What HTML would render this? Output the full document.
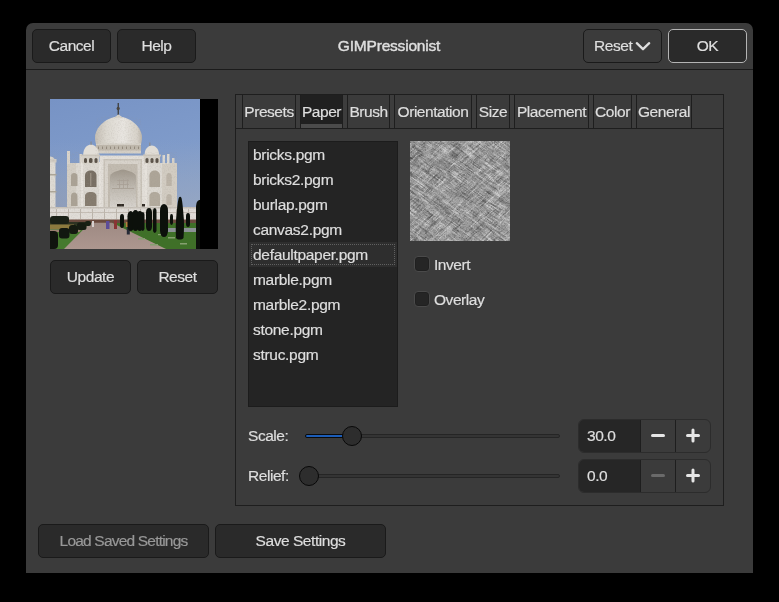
<!DOCTYPE html>
<html><head><meta charset="utf-8">
<style>
*{box-sizing:border-box;margin:0;padding:0}
html,body{width:779px;height:602px;background:#000;overflow:hidden}
body{position:relative;font-family:"Liberation Sans",sans-serif;color:#dedede;font-size:15.5px}
.abs{position:absolute}
#win{position:absolute;left:26px;top:23px;width:727px;height:550px;background:#3b3b3b;border-radius:7px 7px 0 0}
.hline{position:absolute;left:26px;top:69px;width:727px;height:1px;background:#1b1b1b}
.btn{position:absolute;background:#2a2a2a;border:1px solid #1a1a1a;border-radius:5px}
.t{position:absolute;white-space:nowrap;will-change:transform;letter-spacing:-0.45px;-webkit-text-stroke:0.2px currentColor;line-height:18px;height:18px}
.list{position:absolute;left:248px;top:141px;width:150px;height:266px;background:#242424;border:1px solid #1c1c1c}
.nb{position:absolute;left:235px;top:94px;width:489px;height:412px;border:1px solid #1e1e1e}
.tab{position:absolute;top:95px;height:34px;border-bottom:1px solid #1e1e1e}
.sep{position:absolute;top:95px;height:34px;width:6px;border-left:1px solid #1e1e1e;border-right:1px solid #1e1e1e;background:#3d3d3d;border-bottom:1px solid #1e1e1e}
.cb{position:absolute;width:16px;height:16px;background:#252525;border:1px solid #4a4a4a;border-radius:4px;box-shadow:inset 0 0 0 1px #202020}
.spin{position:absolute;left:578px;width:133px;height:34px;border:1px solid #2c2c2c;border-radius:6px;background:#3b3b3b;overflow:hidden}
.track{position:absolute;left:305px;width:255px;height:4px;border-radius:2px;background:#343434;border:1px solid #252525}
.knob{position:absolute;width:20px;height:20px;border-radius:50%;background:#2d2d2d;border:1.6px solid #080808}
</style></head><body>
<div id="win"></div>
<div class="hline"></div>
<div class="btn" style="left:32px;top:29px;width:79px;height:34px"></div>
<div class="t" style="left:32px;top:36.63px;width:79px;text-align:center;font-size:15.5px;">Cancel</div>
<div class="btn" style="left:117px;top:29px;width:79px;height:34px"></div>
<div class="t" style="left:117px;top:36.63px;width:79px;text-align:center;font-size:15.5px;">Help</div>
<div class="t" style="left:289px;top:36.63px;width:200px;text-align:center;font-size:15.5px;-webkit-text-stroke:0.45px #dedede;letter-spacing:-0.2px">GIMPressionist</div>
<div class="btn" style="left:583px;top:29px;width:79px;height:34px;background:#3b3b3b"></div>
<div class="t" style="left:594px;top:36.63px;font-size:15.5px;">Reset</div>
<svg class="abs" style="left:634px;top:39px" width="18" height="14"><path d="M2.8 4.2 L9 10.2 L15.2 4.2" stroke="#dedede" stroke-width="2.3" fill="none" stroke-linecap="round" stroke-linejoin="round"/></svg>
<div class="btn" style="left:668px;top:29px;width:79px;height:34px;border:1.5px solid #b4b4b4"></div>
<div class="t" style="left:668px;top:36.63px;width:79px;text-align:center;font-size:15.5px;">OK</div>
<div class="abs" style="left:50px;top:99px;width:168px;height:150px;background:#000" id="prev"><svg width="168" height="150" viewBox="0 0 168 150" style="position:absolute;left:0;top:0">
<defs>
<linearGradient id="sky" x1="0" y1="0" x2="0.25" y2="1">
<stop offset="0" stop-color="#7793c5"/><stop offset="0.5" stop-color="#7f9bca"/><stop offset="0.8" stop-color="#8ba2c8"/><stop offset="1" stop-color="#96a9c3"/>
</linearGradient>
<radialGradient id="haze2" cx="0" cy="1" r="1"><stop offset="0" stop-color="#8e9ab2" stop-opacity="0.75"/><stop offset="1" stop-color="#8e9ab2" stop-opacity="0"/></radialGradient>
<linearGradient id="haze" x1="0" y1="0" x2="0" y2="1"><stop offset="0" stop-color="#98a6bf" stop-opacity="0"/><stop offset="1" stop-color="#98a6bf" stop-opacity="0.55"/></linearGradient>
<linearGradient id="dome" x1="0" y1="0" x2="1" y2="0">
<stop offset="0" stop-color="#c4beb4"/><stop offset="0.25" stop-color="#dcd8d0"/><stop offset="0.6" stop-color="#e8e5e0"/><stop offset="0.9" stop-color="#d6d1c8"/><stop offset="1" stop-color="#bcb5aa"/>
</linearGradient>
<linearGradient id="arch" x1="0" y1="0" x2="0" y2="1">
<stop offset="0" stop-color="#9e968a"/><stop offset="0.45" stop-color="#bdb7ae"/><stop offset="1" stop-color="#d6d2cc"/>
</linearGradient>
<linearGradient id="path" x1="0" y1="0" x2="0" y2="1">
<stop offset="0" stop-color="#9e8a83"/><stop offset="1" stop-color="#ad978f"/>
</linearGradient>
<filter id="tx" x="0" y="0" width="100%" height="100%"><feTurbulence type="fractalNoise" baseFrequency="0.7" numOctaves="2" seed="3"/><feColorMatrix type="matrix" values="0 0 0 0 0.35  0 0 0 0 0.32  0 0 0 0 0.28  0 0 0 -2.2 1.2"/></filter>
<clipPath id="bld"><path d="M0 57 H6 V109 H0Z M17 53 H31 V63 H45 V45 L46 20 C55 15 80 15 91 20 L92 45 V53 H127 V108 H147 V121 H0 V108 H17Z"/></clipPath>
</defs>
<rect x="0" y="0" width="150" height="150" fill="url(#sky)"/>
<rect x="0" y="40" width="150" height="75" fill="url(#haze)"/>
<rect x="0" y="50" width="45" height="60" fill="url(#haze2)"/>
<!-- left minaret -->
<rect x="0" y="63" width="5.5" height="46" fill="#dedad3"/>
<rect x="0" y="60" width="6.5" height="3.5" fill="#d0cbc3"/>
<path d="M0 60 L0 57.5 C2 57.5 4 58.5 4.5 60 Z" fill="#d8d3ca"/>
<rect x="0" y="75" width="6.5" height="1.5" fill="#aca598"/>
<rect x="0" y="92" width="6.5" height="1.5" fill="#aca598"/>
<!-- main dome finial -->
<rect x="67.6" y="4" width="1.3" height="12" fill="#3e3c3a"/>
<ellipse cx="68.2" cy="9.5" rx="1.6" ry="1.8" fill="#4a4640"/>
<!-- dome -->
<path d="M68.5 17.2 C75 18 81.5 20.5 86.5 26 C90.5 30.5 92.2 35 92 39 C91.8 42 91.3 44 90.8 46 L46.2 46 C45.7 44 45.2 42 45 39 C44.8 35 46.5 30.5 50.5 26 C55.5 20.5 62 18 68.5 17.2 Z" fill="url(#dome)"/>
<path d="M63.5 19.2 C65.5 17.5 67.5 16 68.5 15.5 C69.5 16 71.5 17.5 73.5 19.2 Z" fill="#d8d3ca"/>
<!-- drum -->
<rect x="46" y="44.5" width="45" height="10" fill="#d4cfc6"/>
<rect x="46" y="46" width="45" height="5.5" fill="#bfb8ac"/>
<g fill="#948b7e"><rect x="48" y="47.5" width="1" height="2.5"/><rect x="52" y="47.5" width="1" height="2.5"/><rect x="56" y="47.5" width="1" height="2.5"/><rect x="60" y="47.5" width="1" height="2.5"/><rect x="64" y="47.5" width="1" height="2.5"/><rect x="68" y="47.5" width="1" height="2.5"/><rect x="72" y="47.5" width="1" height="2.5"/><rect x="76" y="47.5" width="1" height="2.5"/><rect x="80" y="47.5" width="1" height="2.5"/><rect x="84" y="47.5" width="1" height="2.5"/><rect x="88" y="47.5" width="1" height="2.5"/></g>
<!-- main block -->
<rect x="17" y="64" width="110" height="44" fill="#dcd8d1"/>
<!-- central pishtaq -->
<rect x="49.5" y="56.5" width="46" height="51.5" fill="#e2ded8"/>
<rect x="53.5" y="60" width="38.5" height="48" fill="#c9c3b9"/>
<rect x="55" y="61.5" width="35.5" height="46.5" fill="#d8d3cb"/>
<rect x="58" y="65" width="29.5" height="43" fill="#c2bbb0"/>
<!-- chamfer shading -->
<rect x="17" y="64" width="9" height="44" fill="#d3cec5"/>
<rect x="112" y="64" width="15" height="44" fill="#d2ccc2"/>
<!-- pillars/turrets -->
<rect x="17" y="52" width="3" height="13" fill="#d8d3cb"/>
<rect x="29.5" y="55" width="2.5" height="10" fill="#d8d3cb"/>
<rect x="112.5" y="56" width="2.5" height="9" fill="#dcd8d0"/>
<rect x="117" y="55" width="2.5" height="10" fill="#dcd8d0"/>
<rect x="122" y="59" width="2.5" height="6" fill="#d6d1c9"/>
<rect x="31" y="63" width="2" height="45" fill="#e6e2dc"/>
<rect x="49" y="63" width="2" height="45" fill="#e6e2dc"/>
<rect x="95" y="63" width="2" height="45" fill="#e6e2dc"/>
<!-- chhatris -->
<path d="M41 45.5 C45.5 46 48.8 49.5 48.8 56 L33.2 56 C33.2 49.5 36.5 46 41 45.5Z" fill="#e2ded7"/>
<rect x="31" y="55.5" width="19" height="2" fill="#cbc5bb"/>
<rect x="32" y="57" width="17" height="7.5" fill="#d4cfc6"/>
<rect x="34" y="59" width="3" height="5" rx="1.5" fill="#5a5248"/>
<rect x="39" y="59" width="3.5" height="5" rx="1.5" fill="#5a5248"/>
<rect x="44.5" y="59" width="3" height="5" rx="1.5" fill="#5a5248"/>
<rect x="40.6" y="42.5" width="0.9" height="3.5" fill="#8a857d"/>
<path d="M101.8 46.5 C106 47 109 50 109 56 L94.6 56 C94.6 50 97.6 47 101.8 46.5Z" fill="#e0dcd5"/>
<rect x="93" y="55.5" width="18" height="2" fill="#cbc5bb"/>
<rect x="94" y="57" width="16" height="7.5" fill="#d4cfc6"/>
<rect x="95.5" y="59" width="3" height="5" rx="1.5" fill="#5a5248"/>
<rect x="100.5" y="59" width="3" height="5" rx="1.5" fill="#5a5248"/>
<rect x="105.5" y="59" width="3" height="5" rx="1.5" fill="#5a5248"/>
<rect x="99.4" y="43.5" width="0.9" height="3.5" fill="#8a857d"/>
<!-- central arch -->
<path d="M60 108 L60 78 C60 74 66 72 73 70.5 C80 72 86 74 86 78 L86 108 Z" fill="url(#arch)"/>
<g fill="#a9a196"><rect x="62" y="89" width="22" height="0.9"/><rect x="67" y="81" width="12" height="0.8"/><rect x="67" y="85" width="12" height="0.8"/><rect x="69" y="80" width="0.8" height="9"/><rect x="73" y="80" width="0.8" height="9"/><rect x="77" y="80" width="0.8" height="9"/></g>
<rect x="67" y="105" width="7" height="2.5" fill="#2e2822"/>
<rect x="92" y="105" width="3" height="2.5" fill="#2e2822"/>
<!-- side niches left -->
<path d="M35 88 L35 76.5 C35 73.5 37.5 71.5 40.8 71.5 C44.1 71.5 46.5 73.5 46.5 76.5 L46.5 88 Z" fill="#776e62"/>
<path d="M35 107 L35 97 C35 94.5 37.5 93 40.8 93 C44.1 93 46.5 94.5 46.5 97 L46.5 107 Z" fill="#857b6e"/>
<rect x="40.3" y="74" width="1" height="13" fill="#a59c8e"/>
<path d="M21 87 L21 77 C21 75 22.5 74 24.2 74 C25.9 74 27.5 75 27.5 77 L27.5 87 Z" fill="#aaa295"/>
<path d="M21 107 L21 97 C21 95 22.5 93.5 24.2 93.5 C25.9 93.5 27.5 95 27.5 97 L27.5 107 Z" fill="#aaa295"/>
<!-- side niches right -->
<path d="M99.4 88 L99.4 76.5 C99.4 73.5 102 71.5 104.7 71.5 C107.4 71.5 110 73.5 110 76.5 L110 88 Z" fill="#ada598"/>
<path d="M99.4 107 L99.4 97 C99.4 94.5 102 93 104.7 93 C107.4 93 110 94.5 110 97 L110 107 Z" fill="#b2aa9d"/>
<path d="M116.3 87 L116.3 77 C116.3 75 117.8 74 119 74 C120.2 74 121.7 75 121.7 77 L121.7 87 Z" fill="#bcb4a8"/>
<path d="M116.3 106 L116.3 98 C116.3 96 117.8 95 119 95 C120.2 95 121.7 96 121.7 98 L121.7 106 Z" fill="#bcb4a8"/>
<!-- platform -->
<rect x="0" y="108" width="147" height="13" fill="#e0dcd7"/>
<rect x="0" y="108" width="147" height="1.5" fill="#c6c0b8"/>
<g fill="#bdb6ad">
<rect x="0" y="113" width="147" height="0.8"/>
<rect x="6" y="110" width="1" height="10"/><rect x="18" y="110" width="1" height="10"/><rect x="30" y="110" width="1" height="10"/><rect x="42" y="110" width="1" height="10"/><rect x="54" y="110" width="1" height="10"/><rect x="66" y="110" width="1" height="10"/><rect x="78" y="110" width="1" height="10"/><rect x="90" y="110" width="1" height="10"/><rect x="102" y="110" width="1" height="10"/><rect x="114" y="110" width="1" height="10"/><rect x="126" y="110" width="1" height="10"/><rect x="138" y="110" width="1" height="10"/>
</g>
<rect x="0" y="0" width="150" height="150" filter="url(#tx)" clip-path="url(#bld)" opacity="0.22"/>
<!-- red strip -->
<rect x="0" y="120.5" width="150" height="4" fill="#6a4a3e"/>
<!-- grass -->
<rect x="0" y="124" width="150" height="26" fill="#467a2e"/>
<path d="M62 124 L150 124 L150 150 L116 150 Z" fill="#3f7028"/>
<!-- path -->
<path d="M40 123.8 L62 123.8 L116 150 L14 150 Z" fill="url(#path)"/>
<!-- left garden -->
<rect x="0" y="123" width="38" height="3" fill="#2e3322"/>
<rect x="0" y="125.5" width="24" height="4.5" fill="#8c7a3e"/>
<path d="M0 130.5 L31 130.5 L29.5 133 L0 133 Z" fill="#9a8070"/>
<rect x="0" y="117" width="19" height="8" rx="3" fill="#1a2016"/>
<rect x="-3" y="132" width="11" height="18" rx="4" fill="#10140e"/>
<rect x="9" y="129" width="10.5" height="10.5" rx="3" fill="#121810"/>
<rect x="19" y="126" width="9" height="9" rx="3" fill="#141a10"/>
<rect x="27" y="123.5" width="9.5" height="7.5" rx="2.5" fill="#161c12"/>
<rect x="35" y="122" width="6" height="5" rx="2" fill="#182014"/>
<!-- people -->
<rect x="42" y="122" width="2" height="6" fill="#d8d2d0"/>
<rect x="56" y="122" width="3.5" height="8" fill="#5c4c98"/>
<rect x="64" y="121" width="3" height="9" fill="#8a3434"/>
<rect x="75.8" y="123" width="5.2" height="5" fill="#b87e40"/>
<rect x="76.8" y="128" width="3" height="7.5" fill="#262a36"/>
<!-- pool & stones -->
<rect x="118" y="129" width="28" height="4" fill="#8c9296"/>
<g fill="#86a070"><rect x="88" y="139" width="7" height="1.5"/><rect x="100" y="145" width="8" height="1.5"/><rect x="118" y="138" width="7" height="1.5"/><rect x="130" y="144" width="7" height="1.5"/><rect x="108" y="135" width="6" height="1.2"/></g>
<!-- cypress trees -->
<g fill="#0c100b">
<rect x="70" y="115" width="4" height="14" rx="2.00" ry="3.20"/>
<rect x="77.5" y="112" width="6.5" height="20" rx="3.25" ry="5.20"/>
<rect x="82.5" y="111" width="6.0" height="21" rx="3.00" ry="4.80"/>
<rect x="87" y="112" width="5.5" height="20" rx="2.75" ry="4.40"/>
<rect x="91" y="113" width="3.5" height="19" rx="1.75" ry="2.80"/>
<rect x="96" y="109" width="6" height="23" rx="3.00" ry="4.80"/>
<rect x="103" y="109" width="3.5" height="25" rx="1.75" ry="2.80"/>
<rect x="110" y="105" width="8" height="33" rx="4.00" ry="6.40"/>
<rect x="120" y="115" width="3" height="11" rx="1.50" ry="2.40"/>
<rect x="136" y="114" width="4" height="14" rx="2.00" ry="3.20"/>
<path d="M126 139 C125.5 130 125.8 122 126.5 116 C127 110 127.5 104 128.5 100 C129 97.5 130.5 97 131.5 99 C132.5 103 133 110 133.5 116 C134.2 122 134.2 130 133.5 139 C132 141 127.5 141 126 139Z"/>
<path d="M146 150 L146 108 C146.3 103 147.5 101 150 101 L150 150Z"/>
</g>
<rect x="150" y="0" width="18" height="150" fill="#000"/>
</svg>
</div>
<div class="btn" style="left:50px;top:260px;width:81px;height:34px"></div>
<div class="t" style="left:50px;top:267.83px;width:81px;text-align:center;font-size:15.5px;">Update</div>
<div class="btn" style="left:137px;top:260px;width:81px;height:34px"></div>
<div class="t" style="left:137px;top:267.83px;width:81px;text-align:center;font-size:15.5px;">Reset</div>
<div class="nb"></div>
<div class="sep" style="left:235px;width:8px"></div>
<div class="sep" style="left:295px;width:6px"></div>
<div class="sep" style="left:342px;width:6px"></div>
<div class="sep" style="left:389px;width:6px"></div>
<div class="sep" style="left:471px;width:6px"></div>
<div class="sep" style="left:509px;width:6px"></div>
<div class="sep" style="left:588px;width:6px"></div>
<div class="sep" style="left:631px;width:6px"></div>
<div class="tab" style="left:243px;width:52px"></div>
<div class="t" style="left:243px;top:103.13px;width:52px;text-align:center;font-size:15.5px;">Presets</div>
<div class="tab" style="left:301px;width:41px;background:#202020;border-bottom:5px solid #4b4b4b"></div>
<div class="abs" style="left:301px;top:128px;width:41px;height:1px;background:#1e1e1e"></div>
<div class="t" style="left:301px;top:103.13px;width:41px;text-align:center;font-size:15.5px;">Paper</div>
<div class="tab" style="left:348px;width:41px"></div>
<div class="t" style="left:348px;top:103.13px;width:41px;text-align:center;font-size:15.5px;">Brush</div>
<div class="tab" style="left:395px;width:76px"></div>
<div class="t" style="left:395px;top:103.13px;width:76px;text-align:center;font-size:15.5px;">Orientation</div>
<div class="tab" style="left:477px;width:32px"></div>
<div class="t" style="left:477px;top:103.13px;width:32px;text-align:center;font-size:15.5px;">Size</div>
<div class="tab" style="left:515px;width:73px"></div>
<div class="t" style="left:515px;top:103.13px;width:73px;text-align:center;font-size:15.5px;">Placement</div>
<div class="tab" style="left:594px;width:37px"></div>
<div class="t" style="left:594px;top:103.13px;width:37px;text-align:center;font-size:15.5px;">Color</div>
<div class="tab" style="left:637px;width:54px"></div>
<div class="t" style="left:637px;top:103.13px;width:54px;text-align:center;font-size:15.5px;">General</div>
<div class="abs" style="left:691px;top:95px;width:1px;height:34px;background:#1e1e1e"></div>
<div class="abs" style="left:692px;top:128px;width:31px;height:1px;background:#1e1e1e"></div>
<div class="list"></div>
<div class="abs" style="left:249px;top:242px;width:148px;height:25px;background:#2e2e2e"></div>
<div class="abs" style="left:251px;top:244px;width:144px;height:21px;border:1px dotted #606060"></div>
<div class="t" style="left:253px;top:145.63px;font-size:15.5px;letter-spacing:-0.3px">bricks.pgm</div>
<div class="t" style="left:253px;top:170.63px;font-size:15.5px;letter-spacing:-0.3px">bricks2.pgm</div>
<div class="t" style="left:253px;top:195.63px;font-size:15.5px;letter-spacing:-0.3px">burlap.pgm</div>
<div class="t" style="left:253px;top:220.63px;font-size:15.5px;letter-spacing:-0.3px">canvas2.pgm</div>
<div class="t" style="left:253px;top:245.63px;font-size:15.5px;letter-spacing:-0.3px">defaultpaper.pgm</div>
<div class="t" style="left:253px;top:270.63px;font-size:15.5px;letter-spacing:-0.3px">marble.pgm</div>
<div class="t" style="left:253px;top:295.63px;font-size:15.5px;letter-spacing:-0.3px">marble2.pgm</div>
<div class="t" style="left:253px;top:320.63px;font-size:15.5px;letter-spacing:-0.3px">stone.pgm</div>
<div class="t" style="left:253px;top:345.63px;font-size:15.5px;letter-spacing:-0.3px">struc.pgm</div>
<div class="abs" style="left:410px;top:141px;width:100px;height:100px;background:#9a9a9a" id="paper"><svg width="100" height="100" viewBox="0 0 100 100" style="position:absolute;left:0;top:0">
<defs>
<filter id="n1" x="-100%" y="-100%" width="300%" height="300%"><feTurbulence type="turbulence" baseFrequency="0.04 0.8" numOctaves="2" seed="11"/><feColorMatrix type="matrix" values="0 0 0 0 1  0 0 0 0 1  0 0 0 0 1  2.6 0 0 0 -0.55"/></filter>
<filter id="n2" x="-100%" y="-100%" width="300%" height="300%"><feTurbulence type="turbulence" baseFrequency="0.06 0.55" numOctaves="2" seed="23"/><feColorMatrix type="matrix" values="0 0 0 0 0  0 0 0 0 0  0 0 0 0 0  2.6 0 0 0 -0.55"/></filter>
<filter id="n5" x="-100%" y="-100%" width="300%" height="300%"><feTurbulence type="turbulence" baseFrequency="0.04 0.8" numOctaves="2" seed="31"/><feColorMatrix type="matrix" values="0 0 0 0 1  0 0 0 0 1  0 0 0 0 1  2.6 0 0 0 -0.6"/></filter>
<filter id="n6" x="-100%" y="-100%" width="300%" height="300%"><feTurbulence type="turbulence" baseFrequency="0.06 0.55" numOctaves="2" seed="47"/><feColorMatrix type="matrix" values="0 0 0 0 0  0 0 0 0 0  0 0 0 0 0  2.6 0 0 0 -0.6"/></filter>
<filter id="n3" x="0" y="0" width="100%" height="100%"><feTurbulence type="fractalNoise" baseFrequency="0.85" numOctaves="1" seed="5"/><feColorMatrix type="matrix" values="0 0 0 0 0  0 0 0 0 0  0 0 0 0 0  -3 0 0 0 1.6"/></filter>
<filter id="n4" x="0" y="0" width="100%" height="100%"><feTurbulence type="fractalNoise" baseFrequency="0.85" numOctaves="1" seed="9"/><feColorMatrix type="matrix" values="0 0 0 0 1  0 0 0 0 1  0 0 0 0 1  3 0 0 0 -1.45"/></filter>
<clipPath id="pc"><rect width="100" height="100"/></clipPath>
</defs>
<rect width="100" height="100" fill="#9b9b9b"/>
<g clip-path="url(#pc)">
<g transform="rotate(35 50 50)"><rect x="-40" y="-40" width="180" height="180" filter="url(#n1)" opacity="0.45"/><rect x="-40" y="-40" width="180" height="180" filter="url(#n2)" opacity="0.28"/></g>
<g transform="rotate(-42 50 50)"><rect x="-40" y="-40" width="180" height="180" filter="url(#n5)" opacity="0.42"/><rect x="-40" y="-40" width="180" height="180" filter="url(#n6)" opacity="0.25"/></g>
<rect width="100" height="100" filter="url(#n3)" opacity="0.2"/>
<rect width="100" height="100" filter="url(#n4)" opacity="0.16"/>
</g>
</svg>
</div>
<div class="cb" style="left:414px;top:256px"></div>
<div class="t" style="left:434px;top:255.63px;font-size:15.5px;">Invert</div>
<div class="cb" style="left:414px;top:291px"></div>
<div class="t" style="left:434px;top:290.63px;font-size:15.5px;">Overlay</div>
<div class="t" style="left:248px;top:426.63px;font-size:15.5px;">Scale:</div>
<div class="track" style="top:434px"></div>
<div class="abs" style="left:305px;top:434px;width:48px;height:4px;border-radius:2px;background:#1c5db8;border:1px solid #0a0a0a"></div>
<div class="knob" style="left:342px;top:426px"></div>
<div class="t" style="left:248px;top:466.63px;font-size:15.5px;">Relief:</div>
<div class="track" style="top:474px"></div>
<div class="knob" style="left:299px;top:466px"></div>
<div class="spin" style="top:419px"></div>
<div class="abs" style="left:579px;top:420px;width:61px;height:32px;background:#262626;border-radius:5px 0 0 5px"></div>
<div class="abs" style="left:640px;top:420px;width:1px;height:32px;background:#1e1e1e"></div>
<div class="abs" style="left:675px;top:420px;width:1px;height:32px;background:#1e1e1e"></div>
<div class="t" style="left:587px;top:426.63px;font-size:15.5px;">30.0</div>
<svg class="abs" style="left:641px;top:420px" width="34" height="32"><path d="M11.5 15.5 H22.5" stroke="#e6e6e6" stroke-width="3" stroke-linecap="round"/></svg>
<svg class="abs" style="left:676px;top:420px" width="34" height="32"><path d="M11.5 15.5 H22.5 M17 10 V21" stroke="#e6e6e6" stroke-width="3" stroke-linecap="round"/></svg>
<div class="spin" style="top:459px"></div>
<div class="abs" style="left:579px;top:460px;width:61px;height:32px;background:#262626;border-radius:5px 0 0 5px"></div>
<div class="abs" style="left:640px;top:460px;width:1px;height:32px;background:#1e1e1e"></div>
<div class="abs" style="left:675px;top:460px;width:1px;height:32px;background:#1e1e1e"></div>
<div class="t" style="left:587px;top:466.63px;font-size:15.5px;">0.0</div>
<svg class="abs" style="left:641px;top:460px" width="34" height="32"><path d="M11.5 15.5 H22.5" stroke="#6a6a6a" stroke-width="3" stroke-linecap="round"/></svg>
<svg class="abs" style="left:676px;top:460px" width="34" height="32"><path d="M11.5 15.5 H22.5 M17 10 V21" stroke="#e6e6e6" stroke-width="3" stroke-linecap="round"/></svg>
<div class="btn" style="left:38px;top:524px;width:171px;height:34px"></div>
<div class="t" style="left:38px;top:531.93px;width:171px;text-align:center;font-size:15.5px;color:#989898;letter-spacing:-0.8px">Load Saved Settings</div>
<div class="btn" style="left:215px;top:524px;width:171px;height:34px"></div>
<div class="t" style="left:215px;top:531.93px;width:171px;text-align:center;font-size:15.5px;">Save Settings</div>
</body></html>
